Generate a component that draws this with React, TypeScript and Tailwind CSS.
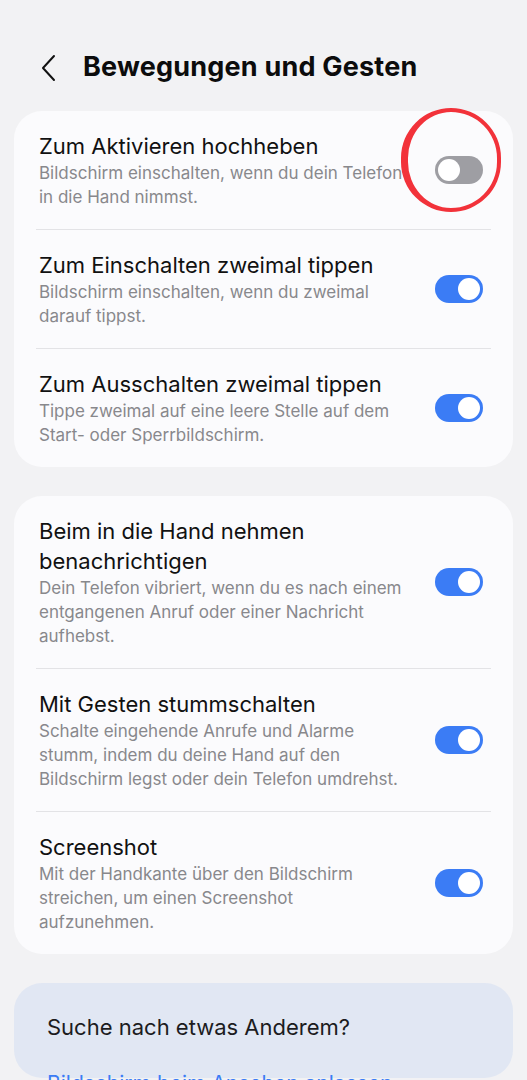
import React from "react";

type Item = {
  title: string;
  desc: string;
  on: boolean;
  marked?: boolean;
};

const group1: Item[] = [
  {
    title: "Zum Aktivieren hochheben",
    desc: "Bildschirm einschalten, wenn du dein Telefon in die Hand nimmst.",
    on: false,
    marked: true,
  },
  {
    title: "Zum Einschalten zweimal tippen",
    desc: "Bildschirm einschalten, wenn du zweimal darauf tippst.",
    on: true,
  },
  {
    title: "Zum Ausschalten zweimal tippen",
    desc: "Tippe zweimal auf eine leere Stelle auf dem Start- oder Sperrbildschirm.",
    on: true,
  },
];

const group2: Item[] = [
  {
    title: "Beim in die Hand nehmen benachrichtigen",
    desc: "Dein Telefon vibriert, wenn du es nach einem entgangenen Anruf oder einer Nachricht aufhebst.",
    on: true,
  },
  {
    title: "Mit Gesten stummschalten",
    desc: "Schalte eingehende Anrufe und Alarme stumm, indem du deine Hand auf den Bildschirm legst oder dein Telefon umdrehst.",
    on: true,
  },
  {
    title: "Screenshot",
    desc: "Mit der Handkante über den Bildschirm streichen, um einen Screenshot aufzunehmen.",
    on: true,
  },
];

function Toggle({ on }: { on: boolean }) {
  return (
    <div
      className={`flex h-[28px] w-[48px] shrink-0 items-center rounded-full p-[3px] ${
        on ? "justify-end bg-[#3b7cf5]" : "justify-start bg-[#9e9ea3]"
      }`}
    >
      <div className="h-[22px] w-[22px] rounded-full bg-white" />
    </div>
  );
}

function Row({ item, last }: { item: Item; last: boolean }) {
  return (
    <div className="px-[22px]">
      <div
        className={`relative flex items-center gap-[26px] py-5 pl-[3px] pr-[8px] ${
          last ? "" : "border-b border-[#e3e3e6]"
        }`}
      >
        <div className="min-w-0 flex-1">
          <div className="text-[22px] leading-[30px] text-[#111]">{item.title}</div>
          <div className="text-[17px] leading-[24px] text-[#88888c]">{item.desc}</div>
        </div>
        <Toggle on={item.on} />
        {item.marked && (
          <div className="pointer-events-none absolute right-[-10px] top-[-3px] h-[104px] w-[100px] rounded-full border-[4px] border-l-[7px] border-[#f2323a]" />
        )}
      </div>
    </div>
  );
}

function Card({ items }: { items: Item[] }) {
  return (
    <div className="rounded-[28px] bg-[#fbfbfd]">
      {items.map((it, i) => (
        <Row key={it.title} item={it} last={i === items.length - 1} />
      ))}
    </div>
  );
}

export default function App() {
  return (
    <div
      className="h-[1080px] overflow-hidden bg-[#f2f2f4]"
      style={{ fontFamily: "Inter, 'Noto Sans', sans-serif" }}
    >
      <div className="flex h-[111px] items-start pt-[50px]">
        <div className="flex w-[83px] justify-center pl-[12px] pt-[4px]">
          <svg width="16" height="28" viewBox="0 0 16 28" fill="none">
            <path d="M14 2 L3 14 L14 26" stroke="#111" strokeWidth="2" strokeLinecap="round" strokeLinejoin="round" />
          </svg>
        </div>
        <h1 className="text-[27px] font-bold leading-[34px] tracking-[0.2px] text-[#0c0c0c]">Bewegungen und Gesten</h1>
      </div>

      <div className="flex flex-col gap-[29px] px-[14px]">
        <Card items={group1} />
        <Card items={group2} />
        <div className="h-[95px] rounded-[28px] bg-[#e1e7f3] px-[33px] pt-[29px]">
          <div className="text-[22px] leading-[30px] text-[#1c1c1e]">Suche nach etwas Anderem?</div>
          <div className="mt-[28px] text-[21px] leading-[28px] text-[#3b7cf5]">Bildschirm beim Ansehen anlassen</div>
        </div>
      </div>
    </div>
  );
}
